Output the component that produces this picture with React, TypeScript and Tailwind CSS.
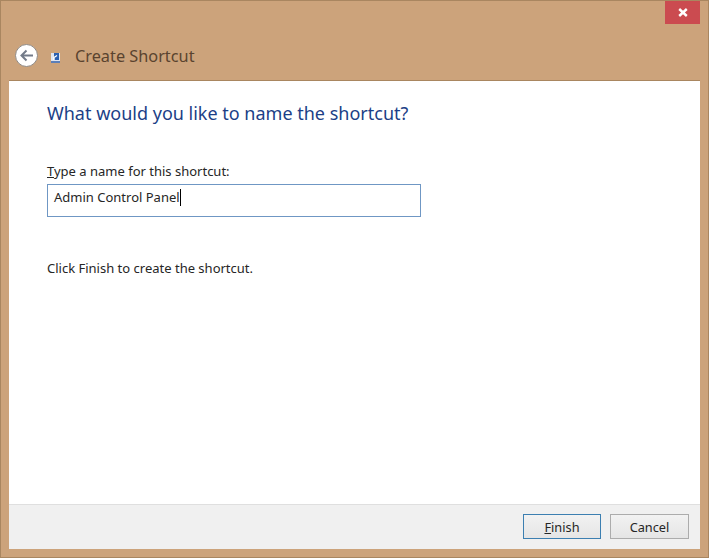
export default function App() {
  return (
    <div className="w-[709px] h-[558px] bg-[#cca37b] border border-[#a98660] flex flex-col font-['Noto_Sans',sans-serif] overflow-hidden">
      <div className="h-[24px] flex justify-end pr-[8px] shrink-0 -mt-px">
        <div className="w-[35px] h-[24px] bg-[#cb4b50] border-t border-[#a98660] flex items-center justify-center">
          <svg width="10" height="9" viewBox="0 0 10 9">
            <path d="M1.2 1 L8.8 8 M8.8 1 L1.2 8" stroke="#fff" strokeWidth="2.4" />
          </svg>
        </div>
      </div>
      <div className="h-[56px] shrink-0 flex items-center pl-[14px] pt-[7px]">
        <div className="w-[23px] h-[23px] rounded-full bg-white border border-[#8f8a86] flex items-center justify-center">
          <svg width="15" height="13" viewBox="0 0 15 13" fill="none" stroke="#737b89" strokeWidth="2">
            <path d="M14 6.5 H2.5 M7.5 1.5 L2.5 6.5 L7.5 11.5" />
          </svg>
        </div>
        <div className="ml-[13px] mt-[5px]">
          <svg width="9" height="10" viewBox="0 0 9 10" className="block">
            <rect x="0" y="0" width="9" height="10" fill="#dfe6f2" />
            <rect x="3" y="0" width="5" height="7" fill="#2a5fb0" />
            <rect x="0" y="8" width="9" height="2" fill="#5c7fb8" />
            <path d="M3 7 L3 4.5 L6 2.5" stroke="#fff" strokeWidth="1.4" fill="none" />
          </svg>
        </div>
        <span className="ml-[15px] text-[16.3px] leading-[20px] text-[#5a432f]">Create Shortcut</span>
      </div>
      <div className="flex-1 mx-[8px] mb-[8px] bg-white border-t border-[#a98660] flex flex-col">
        <div className="flex-1 pl-[38px] pt-[20px] text-[13px] text-[#262626]">
          <h1 className="text-[18px] leading-[24px] font-normal text-[#1c3f87]">What would you like to name the shortcut?</h1>
          <div className="mt-[38px] leading-[16px]"><span className="underline">T</span>ype a name for this shortcut:</div>
          <div className="mt-[5px] w-[374px] h-[33px] border border-[#6f97c4] flex items-center pl-[6px] pb-[7px] leading-[16px]">
            <span>Admin Control Panel</span>
            <span className="w-px h-[17px] bg-black" />
          </div>
          <div className="mt-[43px] leading-[16px]">Click Finish to create the shortcut.</div>
        </div>
        <div className="h-[45px] shrink-0 bg-[#f0f0f0] border-t border-[#dfdfdf] flex items-start justify-end gap-[9px] pt-[9px] pr-[11px] text-[12.75px] text-[#262626]">
          <button className="w-[78px] h-[25px] border border-[#3c7fb1] bg-gradient-to-b from-[#f2f2f2] to-[#e5e5e5] leading-[16px]"><span className="underline">F</span>inish</button>
          <button className="w-[79px] h-[25px] border border-[#acacac] bg-gradient-to-b from-[#f2f2f2] to-[#e5e5e5] leading-[16px]">Cancel</button>
        </div>
      </div>
    </div>
  );
}
